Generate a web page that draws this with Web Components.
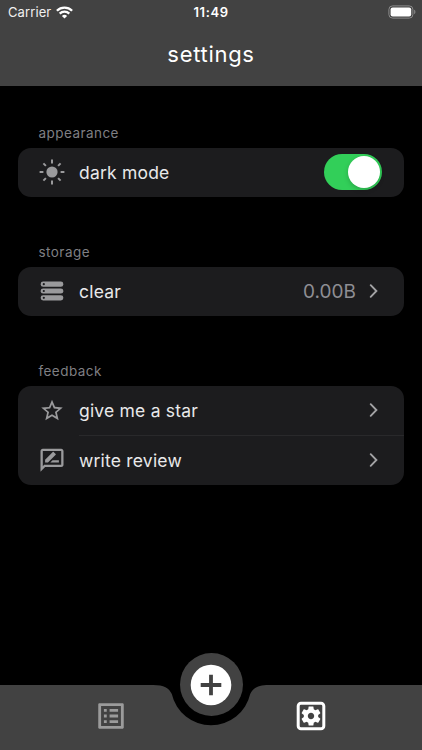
<!DOCTYPE html>
<html lang="en">
<head>
<meta charset="UTF-8">
<meta name="viewport" content="width=device-width, initial-scale=1">
<title>settings</title>
<style>
   body {
      margin: 0;
      background-color: #000000;
      font-family: Inter, "Liberation Sans", sans-serif;
      --bar: #424242;
      --card: #1c1c1e;
      --icon: #9a9a9c;
   }
</style>
</head>
<body>
<settings-app>
   <status-bar slot="top" carrier="Carrier" time="11:49"></status-bar>
   <title-bar slot="top">settings</title-bar>
   <settings-group label="appearance">
      <settings-row icon="sun">dark mode<toggle-switch slot="end"></toggle-switch></settings-row>
   </settings-group>
   <settings-group label="storage">
      <settings-row icon="storage" arrow>clear<span slot="end">0.00B</span></settings-row>
   </settings-group>
   <settings-group label="feedback">
      <settings-row icon="star" arrow>give me a star</settings-row>
      <settings-row icon="review" arrow divider>write review</settings-row>
   </settings-group>
   <tab-bar slot="bottom"></tab-bar>
</settings-app>

<script>
class SettingsApp extends HTMLElement {
   constructor() {
      super();
      this.attachShadow({ mode: 'open' });
      this.shadowRoot.innerHTML = `
         <style>
            :host {
               display: flex;
               flex-direction: column;
               height: 100vh;
               overflow: hidden;
            }
            header {
               box-sizing: border-box;
               height: 85.5px;
               background-color: var(--bar);
            }
            main {
               flex: 1;
               padding: 38px 18px 0;
            }
         </style>
         <header><slot name="top"></slot></header>
         <main><slot></slot></main>
         <slot name="bottom"></slot>
      `;
   }
}
customElements.define('settings-app', SettingsApp);

class StatusBar extends HTMLElement {
   constructor() {
      super();
      this.attachShadow({ mode: 'open' });
      this.shadowRoot.innerHTML = `
         <style>
            :host {
               display: grid;
               grid-template-columns: 1fr auto 1fr;
               align-items: center;
               height: 24px;
               padding: 0 6px;
               color: #ffffff;
               font-size: 13px;
            }
            .left {
               display: flex;
               align-items: center;
               gap: 5px;
               padding-left: 2px;
               letter-spacing: 0.1px;
               color: #f0f0f0;
            }
            .time {
               font-weight: 600;
               letter-spacing: 0.6px;
            }
            .battery {
               justify-self: end;
               margin-top: -1px;
            }
            svg {
               display: block;
            }
         </style>
         <div class="left">
            <span class="carrier"></span>
            <svg width="17" height="13" viewBox="0 0 17 13" fill="none" stroke="#fff" stroke-width="2.3">
               <path d="M.9 4.7a10.8 10.8 0 0 1 15.2 0"/>
               <path d="M3.7 7.6a6.8 6.8 0 0 1 9.6 0"/>
               <path d="M8.5 12.6L5.9 10a3.7 3.7 0 0 1 5.2 0z" fill="#fff" stroke="none"/>
            </svg>
         </div>
         <span class="time"></span>
         <svg class="battery" width="28" height="14" viewBox="0 0 28 14">
            <rect x=".9" y=".9" width="24" height="12.2" rx="3.6" fill="none" stroke="#8b8b8b"/>
            <rect x="2.6" y="2.6" width="20.6" height="8.8" rx="2" fill="#fff"/>
            <path d="M26.2 4.8c1.6.6 1.6 3.8 0 4.4z" fill="#8b8b8b"/>
         </svg>
      `;
   }
   connectedCallback() {
      this.shadowRoot.querySelector('.carrier').textContent = this.getAttribute('carrier');
      this.shadowRoot.querySelector('.time').textContent = this.getAttribute('time');
   }
}
customElements.define('status-bar', StatusBar);

class TitleBar extends HTMLElement {
   constructor() {
      super();
      this.attachShadow({ mode: 'open' });
      this.shadowRoot.innerHTML = `
         <style>
            :host {
               display: flex;
               align-items: center;
               justify-content: center;
               height: 60px;
               color: #ffffff;
               font-size: 22px;
               letter-spacing: 0.7px;
            }
         </style>
         <slot></slot>
      `;
   }
}
customElements.define('title-bar', TitleBar);

class SettingsGroup extends HTMLElement {
   constructor() {
      super();
      this.attachShadow({ mode: 'open' });
      this.shadowRoot.innerHTML = `
         <style>
            :host {
               display: block;
               margin-bottom: 46px;
            }
            .label {
               height: 18px;
               margin: 0 0 6px 20.5px;
               line-height: 18px;
               font-size: 13.5px;
               letter-spacing: 0.45px;
               color: #7f7f83;
            }
            .card {
               border-radius: 13px;
               background-color: var(--card);
            }
         </style>
         <div class="label"></div>
         <div class="card"><slot></slot></div>
      `;
   }
   connectedCallback() {
      this.shadowRoot.querySelector('.label').textContent = this.getAttribute('label');
   }
}
customElements.define('settings-group', SettingsGroup);

const rowIcons = {
   sun: `
      <circle cx="14" cy="14" r="5.6"/>
      <path d="M14 1.6v3.8M14 22.6v3.8M1.6 14h3.8M22.6 14h3.8M5.4 5.4l2.5 2.5M20.1 20.1l2.5 2.5M5.4 22.6l2.5-2.5M20.1 7.9l2.5-2.5" stroke="currentColor" stroke-width="2"/>
   `,
   storage: `
      <rect x="2.7" y="4.6" width="22.6" height="5.2" rx="2.4"/>
      <rect x="2.7" y="11.4" width="22.6" height="5.2" rx="2.4"/>
      <rect x="2.7" y="18.2" width="22.6" height="5.2" rx="2.4"/>
      <g fill="#1c1c1e">
         <circle cx="5.8" cy="7.2" r="1.1"/>
         <circle cx="5.8" cy="14" r="1.1"/>
         <circle cx="5.8" cy="20.8" r="1.1"/>
      </g>
   `,
   star: `
      <path transform="translate(1.1 1.6) scale(1.075)" d="M22 9.24l-7.19-.62L12 2 9.19 8.63 2 9.24l5.46 4.73L5.82 21 12 17.27 18.18 21l-1.63-7.03L22 9.24zM12 15.4l-3.76 2.27 1-4.28-3.32-2.88 4.38-.38L12 6.1l1.71 4.04 4.38.38-3.32 2.88 1 4.28L12 15.4z"/>
   `,
   review: `
      <g transform="translate(.2 .4) scale(1.15)">
         <path d="M20 2H4c-1.1 0-2 .9-2 2v18l4-4h14c1.1 0 2-.9 2-2V4c0-1.1-.9-2-2-2zm0 14H5.17L4 17.17V4h16v12z"/>
         <path d="M10.5 14H18v-2h-5.5zM6 14h2.5l6.7-6.7c.2-.2.2-.5 0-.7l-1.8-1.8c-.2-.2-.5-.2-.7 0L6 11.5z"/>
      </g>
   `
};

class SettingsRow extends HTMLElement {
   constructor() {
      super();
      this.attachShadow({ mode: 'open' });
      this.shadowRoot.innerHTML = `
         <style>
            :host {
               display: flex;
               align-items: stretch;
               height: 49px;
               padding-left: 20px;
               color: #e9e9ea;
               font-size: 17.5px;
               letter-spacing: 0.2px;
            }
            :host([divider]) {
               height: 50px;
            }
            .icon {
               align-self: center;
               width: 28px;
               height: 28px;
               margin-right: 13px;
               color: var(--icon);
               fill: currentColor;
            }
            .content {
               display: flex;
               flex: 1;
               align-items: center;
               box-sizing: border-box;
               padding-right: 22.5px;
            }
            :host([divider]) .content {
               border-top: 1px solid #29292b;
            }
            .text {
               flex: 1;
            }
            .end {
               display: flex;
               color: #8e8e93;
               font-size: 19px;
               letter-spacing: 0;
            }
            .arrow {
               display: none;
               width: 12px;
               height: 16px;
               margin: 0 1.8px 0 11.7px;
               fill: none;
               stroke: #a3a3a5;
               stroke-width: 1.9;
               stroke-linecap: round;
            }
            :host([arrow]) .arrow {
               display: block;
            }
         </style>
         <svg class="icon" viewBox="0 0 28 28"></svg>
         <div class="content">
            <span class="text"><slot></slot></span>
            <span class="end"><slot name="end"></slot></span>
            <svg class="arrow" viewBox="0 0 12 16"><path d="M2.7 2.2L8.4 8l-5.7 5.8"/></svg>
         </div>
      `;
   }
   connectedCallback() {
      this.shadowRoot.querySelector('.icon').innerHTML = rowIcons[this.getAttribute('icon')];
   }
}
customElements.define('settings-row', SettingsRow);

class ToggleSwitch extends HTMLElement {
   constructor() {
      super();
      this._isOn = true;
      this.attachShadow({ mode: 'open' });
      this.shadowRoot.innerHTML = `
         <style>
            :host {
               display: flex;
               box-sizing: border-box;
               width: 57.5px;
               height: 35.5px;
               padding: 1.75px;
               border-radius: 18px;
               background-color: #39393d;
            }
            :host(.on) {
               justify-content: flex-end;
               background-color: #32cf59;
            }
            .knob {
               width: 32px;
               height: 32px;
               border-radius: 50%;
               background-color: #ffffff;
               box-shadow: 0 2px 5px #00000030;
            }
         </style>
         <div class="knob"></div>
      `;
   }
   connectedCallback() {
      this.classList.toggle('on', this._isOn);
      this.addEventListener('click', () => {
         this._isOn = !this._isOn;
         this.classList.toggle('on', this._isOn);
      });
   }
}
customElements.define('toggle-switch', ToggleSwitch);

class TabBar extends HTMLElement {
   constructor() {
      super();
      this.attachShadow({ mode: 'open' });
      this.shadowRoot.innerHTML = `
         <style>
            :host {
               display: block;
               position: relative;
               height: 65.5px;
            }
            svg {
               display: block;
            }
            /* the bar with its notch lies behind the tabs */
            .shape {
               position: absolute;
               inset: 0;
               fill: var(--bar);
            }
            .tabs {
               position: relative;
               display: grid;
               grid-template-columns: 1fr 1fr;
               align-items: center;
               justify-items: center;
               height: 63px;
               padding: 0 11px;
            }
            .add {
               position: absolute;
               left: 50%;
               top: -31.5px;
               display: flex;
               align-items: center;
               justify-content: center;
               width: 63px;
               height: 63px;
               margin-left: -31.5px;
               border-radius: 50%;
               background-color: var(--bar);
            }
         </style>
         <svg class="shape" width="422" height="66" viewBox="0 0 422 66">
            <path d="M0 0H153C164 0 169 3 171.8 9A40.2 40.2 0 0 0 250.2 9C253 3 258 0 269 0H422V66H0z"/>
         </svg>
         <div class="tabs">
            <svg width="34" height="34" viewBox="0 0 24 24" fill="#9b9b9b">
               <path d="M19 5v14H5V5h14m1.1-2H3.9c-.5 0-.9.4-.9.9v16.2c0 .4.4.9.9.9h16.2c.4 0 .9-.5.9-.9V3.9c0-.5-.5-.9-.9-.9zM11 7h6v2h-6V7zm0 4h6v2h-6v-2zm0 4h6v2h-6zM7 7h2v2H7zm0 4h2v2H7zm0 4h2v2H7z"/>
            </svg>
            <svg width="30" height="30" viewBox="0 0 30 30" fill="#fff">
               <rect x="2.2" y="2.2" width="25.6" height="25.6" rx="2.8" fill="none" stroke="#fff" stroke-width="3"/>
               <path transform="translate(3 3)" d="M19.14 12.94c.04-.3.06-.61.06-.94 0-.32-.02-.64-.07-.94l2.03-1.58c.18-.14.23-.41.12-.61l-1.92-3.32c-.12-.22-.37-.29-.59-.22l-2.39.96c-.5-.38-1.03-.7-1.62-.94l-.36-2.54c-.04-.24-.24-.41-.48-.41h-3.84c-.24 0-.43.17-.47.41l-.36 2.54c-.59.24-1.13.57-1.62.94l-2.39-.96c-.22-.08-.47 0-.59.22L2.74 8.87c-.12.21-.08.47.12.61l2.03 1.58c-.05.3-.09.63-.09.94s.02.64.07.94l-2.03 1.58c-.18.14-.23.41-.12.61l1.92 3.32c.12.22.37.29.59.22l2.39-.96c.5.38 1.03.7 1.62.94l.36 2.54c.05.24.24.41.48.41h3.84c.24 0 .44-.17.47-.41l.36-2.54c.59-.24 1.13-.56 1.62-.94l2.39.96c.22.08.47 0 .59-.22l1.92-3.32c.12-.22.07-.47-.12-.61l-2.01-1.58zM12 15.2c-1.77 0-3.2-1.43-3.2-3.2s1.43-3.2 3.2-3.2 3.2 1.43 3.2 3.2-1.43 3.2-3.2 3.2z"/>
            </svg>
         </div>
         <div class="add">
            <svg width="42" height="42" viewBox="0 0 42 42">
               <circle cx="21" cy="21" r="20.3" fill="#fff"/>
               <path d="M21 10.7v20.6M10.7 21h20.6" stroke="#424242" stroke-width="3.8"/>
            </svg>
         </div>
      `;
   }
}
customElements.define('tab-bar', TabBar);
</script>
</body>
</html>
